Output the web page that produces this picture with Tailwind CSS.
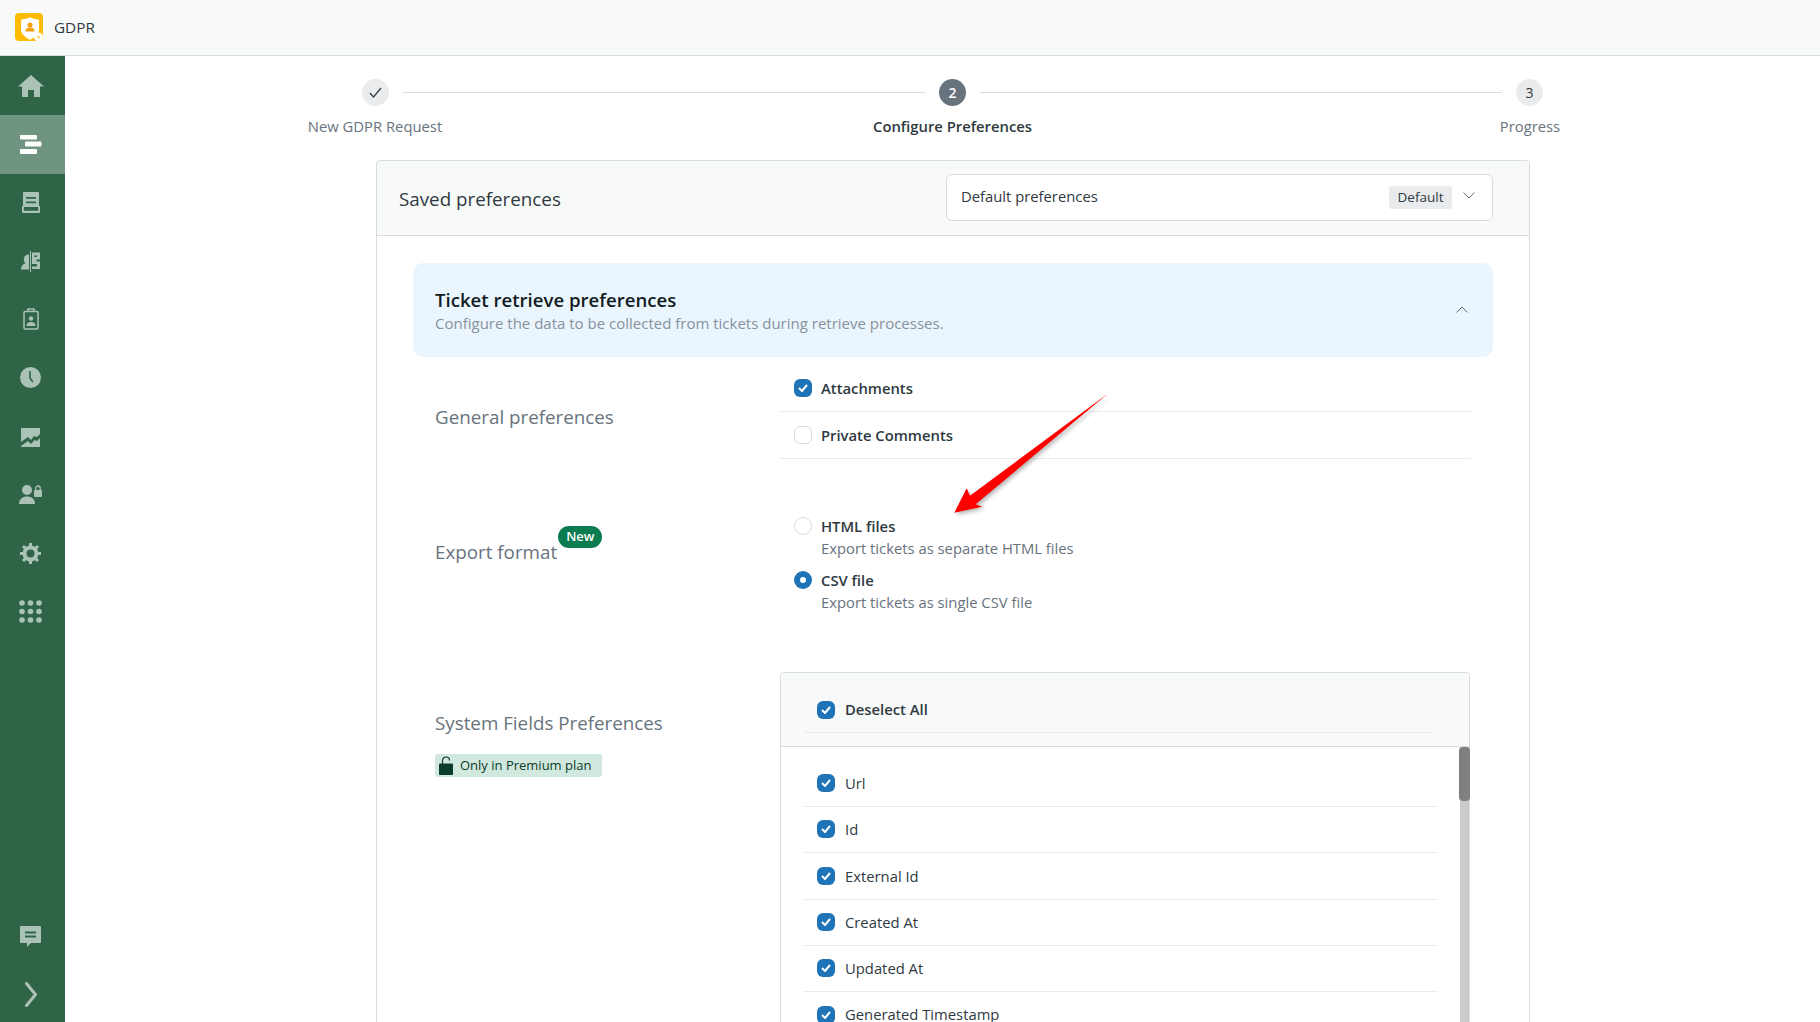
<!DOCTYPE html>
<html lang="en">
<head>
	<meta charset="UTF-8">
	<title>GDPR</title>
	<script src="https://cdn.jsdelivr.net/npm/@tailwindcss/browser@4"></script>
</head>
<body class="bg-white">
	<div class="relative h-[1022px] w-[1820px] overflow-hidden font-['Open_Sans',sans-serif] text-[14.800px] text-[#2f3941]">

		<!-- top bar -->
		<div class="h-[56px] flex items-center bg-[#f8f9f9] border-b border-[#d8dcde] pl-[15px] pb-[1px]">
			<svg class="w-[28px] h-[28px]" viewBox="0 0 28 28">
				<rect width="28" height="28" rx="4" fill="#fdbc00"/>
				<path d="M7 6.500Q11 6 15 4.500Q19 6 23 6.500Q24 6.500 24 8v8c0 5-4 8-9 11c-5-3-9-6-9-11V8Q6 6.500 7 6.500z" fill="#fff"/>
				<circle cx="15" cy="12" r="2.500" fill="#f59e0b"/>
				<path d="M10.500 18.500c0-3 2-4 4.500-4s4.500 1 4.500 4z" fill="#f59e0b"/>
				<circle cx="23.500" cy="24" r="4.500" fill="#fff"/>
				<circle cx="23.500" cy="24" r="1.500" fill="#fdd466"/>
			</svg>
			<span class="ml-[11px] text-[#2f3941] text-[15.300px]">GDPR</span>
		</div>

		<div class="flex h-[966px]">
			<!-- sidebar -->
			<div class="w-[65px] bg-[#2f6447] flex flex-col pt-[1px] text-[#abc3b6]">
				<div class="h-[58.330px] flex items-center justify-center pr-[4px]">
					<svg class="w-[26px] h-[22px]" viewBox="0 0 26 22" fill="currentColor"><path d="M13 0L26 11.500h-4V22h-6v-7h-6v7H4V11.500H0z"/></svg>
				</div>
				<div class="h-[58.330px] flex items-center justify-center pr-[4px] bg-[#6f9480] text-white">
					<svg class="w-[22px] h-[19px]" viewBox="0 0 22 19" fill="currentColor"><rect x="0" y="0" width="17" height="4.500" rx="1"/><rect x="5" y="6.500" width="16.500" height="5" rx="1"/><rect x="0" y="14" width="17" height="5" rx="1"/></svg>
				</div>
				<div class="h-[58.330px] flex items-center justify-center pr-[4px]">
					<svg class="w-[18px] h-[21px]" viewBox="0 0 18 21" fill="currentColor"><path fill-rule="evenodd" d="M2 0h14a1 1 0 0 1 1 1v14H1V1a1 1 0 0 1 1-1zM4 5v1.700h10V5zM4 9.500v1.700h10V9.500z"/><path d="M0 14h1.800v4.800h14.400V14H18v6a1 1 0 0 1-1 1H1a1 1 0 0 1-1-1z"/></svg>
				</div>
				<div class="h-[58.330px] flex items-center justify-center pr-[4px]">
					<svg class="w-[19px] h-[21px]" viewBox="0 0 19 21" fill="currentColor"><path d="M8 3.500v15H0c0-3.500 2-5.500 4.500-6.300C3.200 11 2.800 9.500 2.800 8c0-2.500 2.200-4.500 5.200-4.500z"/><rect x="9" y="0" width="1" height="21"/><path fill-rule="evenodd" d="M11 1.500h8v7h-3.500v2H19v7.500h-8v-2.500h5V13h-5zM13.200 4.500v1.600H16V4.500z"/></svg>
				</div>
				<div class="h-[58.330px] flex items-center justify-center pr-[4px]">
					<svg class="w-[16px] h-[22px]" viewBox="0 0 16 22" fill="none" stroke="currentColor" stroke-width="1.500"><rect x="1" y="3.500" width="14" height="17.500" rx="1"/><path d="M5 3.500V1h6v2.500" /><circle cx="8" cy="10.500" r="2.200" fill="currentColor" stroke="none"/><path d="M3.500 18c0-3 2-4 4.500-4s4.500 1 4.500 4z" fill="currentColor" stroke="none"/></svg>
				</div>
				<div class="h-[58.330px] flex items-center justify-center pr-[4px]">
					<svg class="w-[21px] h-[21px]" viewBox="0 0 21 21"><circle cx="10.500" cy="10.500" r="10.500" fill="currentColor"/><path d="M10 4.500v6.500l2.500 3.500" fill="none" stroke="#2f6447" stroke-width="1.600" stroke-linecap="round"/></svg>
				</div>
				<div class="h-[58.330px] flex items-center justify-center pr-[4px] pt-[2px]">
					<svg class="w-[19px] h-[19px]" viewBox="0 0 19 19" fill="currentColor"><path d="M0 0h19v6l-3 3-3-1-3 4-3-3-7 5z"/><path d="M0 18l7-5 3 3 3.500-4 2.500 1 3-3v9.500H1z"/></svg>
				</div>
				<div class="h-[58.330px] flex items-center justify-center pr-[4px]">
					<svg class="w-[23px] h-[19px]" viewBox="0 0 23 19" fill="currentColor"><circle cx="8" cy="5" r="5"/><path d="M0 19c0-5 3.500-7.500 8-7.500s8 2.500 8 7.500z"/><rect x="15" y="5" width="8" height="7" rx="1"/><path d="M16.800 5V3.200a2.200 2.200 0 0 1 4.400 0V5" fill="none" stroke="currentColor" stroke-width="1.300"/></svg>
				</div>
				<div class="h-[58.330px] flex items-center justify-center pr-[4px] pt-[1px]">
					<svg class="w-[21px] h-[21px]" viewBox="0 0 21 21"><circle cx="10.500" cy="10.500" r="6" fill="none" stroke="currentColor" stroke-width="4"/><path d="M10.500 0v4M10.500 17v4M0 10.500h4M17 10.500h4M3 3l3 3M15 15l3 3M18 3l-3 3M6 15l-3 3" stroke="currentColor" stroke-width="3"/></svg>
				</div>
				<div class="h-[58.330px] flex items-center justify-center pr-[4px]">
					<svg class="w-[23px] h-[23px]" viewBox="0 0 23 23" fill="currentColor"><circle cx="3" cy="3" r="2.800"/><circle cx="11.500" cy="3" r="2.800"/><circle cx="20" cy="3" r="2.800"/><circle cx="3" cy="11.500" r="2.800"/><circle cx="11.500" cy="11.500" r="2.800"/><circle cx="20" cy="11.500" r="2.800"/><circle cx="3" cy="20" r="2.800"/><circle cx="11.500" cy="20" r="2.800"/><circle cx="20" cy="20" r="2.800"/></svg>
				</div>
				<div class="mt-auto h-[64px] flex items-center justify-center pr-[4px]">
					<svg class="w-[21px] h-[21px]" viewBox="0 0 21 21"><path d="M1 0h19a1 1 0 0 1 1 1v15a1 1 0 0 1-1 1h-9l-4 4v-4H1a1 1 0 0 1-1-1V1a1 1 0 0 1 1-1z" fill="currentColor"/><path d="M5 6.500h11M5 10.500h11" stroke="#2f6447" stroke-width="1.800"/></svg>
				</div>
				<div class="h-[54px] flex items-center justify-center pr-[4px] pb-[2px]">
					<svg class="w-[12px] h-[25px]" viewBox="0 0 12 25" fill="none" stroke="currentColor" stroke-width="3" stroke-linecap="round" stroke-linejoin="round"><path d="M1.500 1.500L10.500 12.500L1.500 23.500"/></svg>
				</div>
			</div>

			<!-- main -->
			<div class="flex-1">
				<!-- stepper -->
				<div class="ml-[297px] w-[1181px] pt-[23px]">
					<div class="flex items-center h-[27px]">
						<div class="w-[27px] h-[27px] rounded-full bg-[#e9ebed] flex items-center justify-center">
							<svg class="w-[13px] h-[11px]" viewBox="0 0 13 11" fill="none" stroke="#2f3941" stroke-width="1.200"><path d="M1 6l3.500 4L12 1"/></svg>
						</div>
						<div class="flex-1 mx-[14px] h-[1px] bg-[#d8dcde]"></div>
						<div class="w-[27px] h-[27px] rounded-full bg-[#68737d] text-white text-[14px] font-semibold flex items-center justify-center">2</div>
						<div class="flex-1 mx-[14px] h-[1px] bg-[#d8dcde]"></div>
						<div class="w-[27px] h-[27px] rounded-full bg-[#e9ebed] text-[14px] flex items-center justify-center">3</div>
					</div>
					<div class="flex justify-between -mx-[87px] mt-[9px] leading-[22px]">
						<div class="w-[200px] text-center text-[#68737d]">New GDPR Request</div>
						<div class="w-[200px] text-center font-semibold">Configure Preferences</div>
						<div class="w-[200px] text-center text-[#68737d]">Progress</div>
					</div>
				</div>

				<!-- card -->
				<div class="ml-[311px] mt-[23px] w-[1154px] h-[900px] border border-[#d8dcde] rounded-t-[4px]">
					<div class="h-[75px] bg-[#f8f9f9] border-b border-[#d8dcde] rounded-t-[4px] flex items-center pl-[22px] pr-[36px]">
						<span class="text-[18.800px] text-[#2f3941] mt-[2px]">Saved preferences</span>
						<div class="ml-auto w-[547px] h-[47px] bg-white border border-[#d8dcde] rounded-[6px] flex items-center pl-[14px] pr-[17px] -mt-[2px]">
							<span class="-mt-[2px]">Default preferences</span>
							<span class="ml-auto h-[23px] px-[8.500px] bg-[#e9ebed] rounded-[3px] text-[13.500px] font-medium flex items-center mt-[1px]">Default</span>
							<svg class="ml-[11px] w-[12px] h-[7px] -mt-[3px]" viewBox="0 0 12 7" fill="none" stroke="#68737d" stroke-width="1"><path d="M.5 .5L6 6L11.500 .5"/></svg>
						</div>
					</div>

					<div class="px-[36px] pt-[27px]">
						<!-- ticket panel -->
						<div class="h-[94px] rounded-[10px] bg-[#ebf5fe] pl-[22px] pr-[25px] flex items-center">
							<div class="mt-[2px]">
								<div class="text-[18.600px] font-semibold leading-[24px] text-[#111b22]">Ticket retrieve preferences</div>
								<div class="text-[15px] leading-[22px] text-[#87929d]">Configure the data to be collected from tickets during retrieve processes.</div>
							</div>
							<svg class="ml-auto w-[12px] h-[7px] -mt-[1px]" viewBox="0 0 12 7" fill="none" stroke="#68737d" stroke-width="1"><path d="M.5 6.500L6 1L11.500 6.500"/></svg>
						</div>

						<!-- general preferences -->
						<div class="flex mt-[8px] pl-[22px]">
							<div class="w-[345px] pt-[40px] text-[18.800px] leading-[24px] text-[#68737d]">General preferences</div>
							<div class="w-[691px]">
								<div class="h-[47px] border-b border-[#e9ebed] flex items-center pl-[14px]">
									<span class="w-[18px] h-[18px] rounded-[6px] bg-[#1f73b7] flex items-center justify-center"><svg class="w-[10px] h-[8px]" viewBox="0 0 10 8" fill="none" stroke="#fff" stroke-width="2"><path d="M1 4l3 3 5-6"/></svg></span>
									<span class="ml-[9px] font-semibold">Attachments</span>
								</div>
								<div class="h-[47px] border-b border-[#e9ebed] flex items-center pl-[14px]">
									<span class="w-[18px] h-[18px] rounded-[6px] bg-white border border-[#d8dcde]"></span>
									<span class="ml-[9px] font-semibold">Private Comments</span>
								</div>
							</div>
						</div>

						<!-- export format -->
						<div class="flex mt-[56px] pl-[22px]">
							<div class="w-[345px] flex pt-[11px]">
								<span class="text-[18.800px] leading-[24px] text-[#68737d] mt-[14px]">Export format</span>
								<span class="h-[22px] px-[8px] rounded-full bg-[#0a7c4f] text-white text-[13px] font-semibold flex items-center ml-[1px]">New</span>
							</div>
							<div class="pl-[14px]">
								<div class="flex items-center h-[22px]">
									<span class="w-[18px] h-[18px] rounded-full bg-white border border-[#d8dcde]"></span>
									<span class="ml-[9px] font-semibold">HTML files</span>
								</div>
								<div class="ml-[27px] leading-[22px] text-[#68737d]">Export tickets as separate HTML files</div>
								<div class="flex items-center h-[22px] mt-[10px]">
									<span class="w-[18px] h-[18px] rounded-full bg-[#1f73b7] flex items-center justify-center"><span class="w-[6px] h-[6px] rounded-full bg-white"></span></span>
									<span class="ml-[9px] font-semibold">CSV file</span>
								</div>
								<div class="ml-[27px] leading-[22px] text-[#68737d]">Export tickets as single CSV file</div>
							</div>
						</div>

						<!-- system fields -->
						<div class="flex mt-[59px] pl-[22px]">
							<div class="w-[345px] pt-[39px]">
								<div class="text-[18.800px] leading-[24px] text-[#68737d]">System Fields Preferences</div>
								<div class="mt-[19px] w-[167px] h-[23px] rounded-[3px] bg-[#d1e8df] flex items-center pl-[4px] text-[13px] font-medium text-[#0b3b29]">
									<svg class="w-[14px] h-[19px]" viewBox="0 0 14 19"><path d="M3.500 9V4.500a3.500 3.500 0 0 1 7 0" fill="none" stroke="#0b3b29" stroke-width="1.200"/><rect x="0" y="7.500" width="14" height="11.500" rx="1" fill="#0b3b29"/></svg>
									<span class="ml-[7px]">Only in Premium plan</span>
								</div>
							</div>
							<div class="relative w-[690px] h-[400px] border border-[#d8dcde] rounded-t-[4px]">
								<div class="h-[74px] bg-[#f8f9f9] border-b border-[#d8dcde] rounded-t-[4px] pl-[23px] pr-[35px]">
									<div class="h-[60px] pt-[14px] border-b border-[#e9ebed] flex items-center pl-[13px]">
										<span class="w-[18px] h-[18px] rounded-[6px] bg-[#1f73b7] flex items-center justify-center"><svg class="w-[10px] h-[8px]" viewBox="0 0 10 8" fill="none" stroke="#fff" stroke-width="2"><path d="M1 4l3 3 5-6"/></svg></span>
										<span class="ml-[10px] font-semibold">Deselect All</span>
									</div>
								</div>
								<div class="pl-[23px] pr-[31px] pt-[14px]">
									<div class="h-[46.200px] border-b border-[#e9ebed] flex items-center pl-[13px] pb-[1px]">
										<span class="w-[18px] h-[18px] rounded-[6px] bg-[#1f73b7] flex items-center justify-center"><svg class="w-[10px] h-[8px]" viewBox="0 0 10 8" fill="none" stroke="#fff" stroke-width="2"><path d="M1 4l3 3 5-6"/></svg></span>
										<span class="ml-[10px]">Url</span>
									</div>
									<div class="h-[46.200px] border-b border-[#e9ebed] flex items-center pl-[13px] pb-[1px]">
										<span class="w-[18px] h-[18px] rounded-[6px] bg-[#1f73b7] flex items-center justify-center"><svg class="w-[10px] h-[8px]" viewBox="0 0 10 8" fill="none" stroke="#fff" stroke-width="2"><path d="M1 4l3 3 5-6"/></svg></span>
										<span class="ml-[10px]">Id</span>
									</div>
									<div class="h-[46.200px] border-b border-[#e9ebed] flex items-center pl-[13px]">
										<span class="w-[18px] h-[18px] rounded-[6px] bg-[#1f73b7] flex items-center justify-center"><svg class="w-[10px] h-[8px]" viewBox="0 0 10 8" fill="none" stroke="#fff" stroke-width="2"><path d="M1 4l3 3 5-6"/></svg></span>
										<span class="ml-[10px]">External Id</span>
									</div>
									<div class="h-[46.200px] border-b border-[#e9ebed] flex items-center pl-[13px]">
										<span class="w-[18px] h-[18px] rounded-[6px] bg-[#1f73b7] flex items-center justify-center"><svg class="w-[10px] h-[8px]" viewBox="0 0 10 8" fill="none" stroke="#fff" stroke-width="2"><path d="M1 4l3 3 5-6"/></svg></span>
										<span class="ml-[10px]">Created At</span>
									</div>
									<div class="h-[46.200px] border-b border-[#e9ebed] flex items-center pl-[13px]">
										<span class="w-[18px] h-[18px] rounded-[6px] bg-[#1f73b7] flex items-center justify-center"><svg class="w-[10px] h-[8px]" viewBox="0 0 10 8" fill="none" stroke="#fff" stroke-width="2"><path d="M1 4l3 3 5-6"/></svg></span>
										<span class="ml-[10px]">Updated At</span>
									</div>
									<div class="h-[46.200px] border-b border-[#e9ebed] flex items-center pl-[13px]">
										<span class="w-[18px] h-[18px] rounded-[6px] bg-[#1f73b7] flex items-center justify-center"><svg class="w-[10px] h-[8px]" viewBox="0 0 10 8" fill="none" stroke="#fff" stroke-width="2"><path d="M1 4l3 3 5-6"/></svg></span>
										<span class="ml-[10px]">Generated Timestamp</span>
									</div>
								</div>
								<!-- scrollbar -->
								<div class="absolute right-0 top-[74px] bottom-0 w-[9px] bg-[#cbcbcb]"></div>
								<div class="absolute -right-[1px] top-[74px] w-[11px] h-[54px] rounded-[4px] bg-[#808080]"></div>
							</div>
						</div>
					</div>
				</div>
			</div>
		</div>

		<!-- red annotation arrow -->
		<svg class="absolute left-0 top-0 w-[1820px] h-[1022px] pointer-events-none drop-shadow-[2px_2px_2px_rgba(0,0,0,0.3)]" viewBox="0 0 1820 1022">
			<polygon points="1108,393.500 970,495.700 966.700,488.300 954.300,512.700 982.300,506.700 975.700,504.300" fill="#ff0000"/>
		</svg>
	</div>
</body>
</html>
